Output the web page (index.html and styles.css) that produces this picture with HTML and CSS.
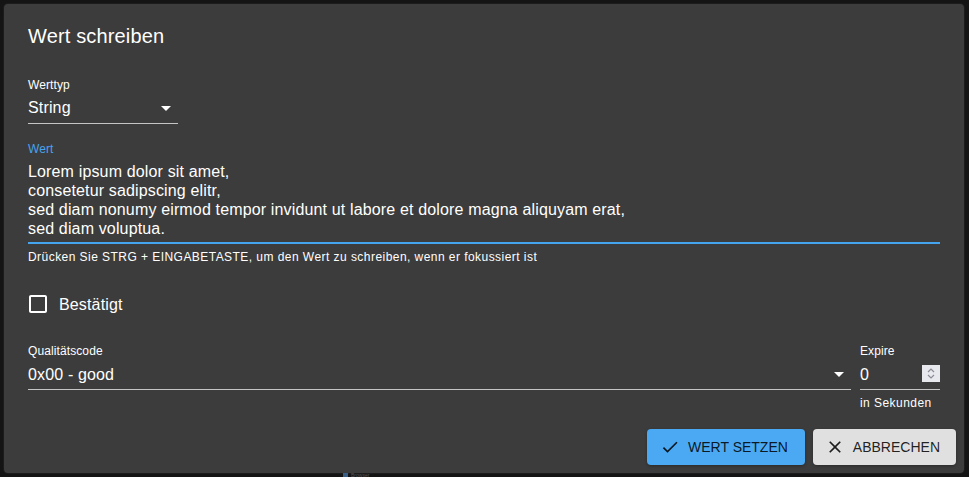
FILE: index.html
```html
<!DOCTYPE html>
<html lang="de">
<head>
<meta charset="utf-8">
<title>Wert schreiben</title>
<link rel="stylesheet" href="styles.css">
</head>
<body>
<div class="dialog">
  <h2 class="title">Wert schreiben</h2>
  <div class="content">
    <div class="field w150">
      <span class="label">Werttyp</span>
      <div class="input select">
        <span class="value">String</span>
        <svg class="arrow" viewBox="0 0 24 24" width="24" height="24"><path d="M7 10l5 5 5-5z" fill="#fff"/></svg>
      </div>
    </div>

    <div class="field mt16">
      <span class="label focused">Wert</span>
      <div class="input multiline">Lorem ipsum dolor sit amet,<br>consetetur sadipscing elitr,<br>sed diam nonumy eirmod tempor invidunt ut labore et dolore magna aliquyam erat,<br>sed diam voluptua.</div>
      <p class="helper">Drücken Sie STRG + EINGABETASTE, um den Wert zu schreiben, wenn er fokussiert ist</p>
    </div>

    <label class="check-row">
      <span class="check">
        <svg viewBox="0 0 24 24" width="24" height="24"><path fill="#fff" d="M19 5v14H5V5h14m0-2H5c-1.11 0-2 .9-2 2v14c0 1.1.89 2 2 2h14c1.1 0 2-.9 2-2V5c0-1.1-.9-2-2-2z"/></svg>
      </span>
      <span class="check-label">Bestätigt</span>
    </label>

    <div class="row">
      <div class="field grow">
        <span class="label">Qualitätscode</span>
        <div class="input select low">
          <span class="value">0x00 - good</span>
          <svg class="arrow" viewBox="0 0 24 24" width="24" height="24"><path d="M7 10l5 5 5-5z" fill="#fff"/></svg>
        </div>
      </div>
      <div class="field expire">
        <span class="label">Expire</span>
        <div class="input number low">
          <span class="value">0</span>
          <span class="spin">
            <svg viewBox="0 0 18 17" width="18" height="17"><path d="M6 7 L9 4 L12 7" fill="none" stroke="#8c8c96" stroke-width="1.2"/><path d="M6 10 L9 13 L12 10" fill="none" stroke="#8c8c96" stroke-width="1.2"/></svg>
          </span>
        </div>
        <p class="helper">in Sekunden</p>
      </div>
    </div>
  </div>
  <div class="actions">
    <button class="btn primary">
      <svg viewBox="0 0 24 24" width="20" height="20"><path fill="currentColor" d="M9 16.17L4.83 12l-1.42 1.41L9 19 21 7l-1.41-1.41z"/></svg>
      <span>Wert setzen</span>
    </button>
    <button class="btn secondary">
      <svg viewBox="0 0 24 24" width="20" height="20"><path fill="currentColor" d="M19 6.41L17.59 5 12 10.59 6.41 5 5 6.41 10.59 12 5 17.59 6.41 19 12 13.41 17.59 19 19 17.59 13.41 12z"/></svg>
      <span>Abbrechen</span>
    </button>
  </div>
</div>
<div class="behind"><span class="behind-icon"></span><span class="behind-text">Browser</span></div>
</body>
</html>
```

FILE: styles.css
```css
* { box-sizing: border-box; }
html, body { margin: 0; padding: 0; }
body {
  background: #141414;
  font-family: "Liberation Sans", Arial, sans-serif;
  color: #fff;
  width: 969px;
  height: 477px;
  overflow: hidden;
}
.dialog {
  margin: 4px 0 0 4px;
  width: 960px;
  background: #3c3c3c;
  border-radius: 4px;
  box-shadow: 0 0 1px 1px rgba(255,255,255,0.04);
  display: flex;
  flex-direction: column;
}
.title {
  margin: 0;
  padding: 16px 24px;
  font-size: 20px;
  font-weight: 400;
  line-height: 32px;
  letter-spacing: 0.15px;
}
.content {
  padding: 8px 24px;
  display: flex;
  flex-direction: column;
}
.field { display: flex; flex-direction: column; }
.w150 { width: 150px; }
.mt16 { margin-top: 16px; }
.label {
  font-size: 12px;
  line-height: 16px;
  height: 16px;
  padding-top: 1px;
  letter-spacing: 0.1px;
  color: #fff;
}
.label.focused { color: #45a4ee; }
.input {
  font-size: 16px;
  line-height: 19px;
  letter-spacing: 0.15px;
  padding: 6px 0 6px;
  border-bottom: 1px solid rgba(255,255,255,0.7);
  display: flex;
  align-items: flex-start;
  height: 32px;
}
.input.low { padding: 7px 0 5px; }
.input .value { flex: 1; }
.select .arrow { margin-top: -2px; margin-right: 0; }
.select.low .arrow { margin-top: -3px; }
.multiline {
  display: block;
  height: 88px;
  border-bottom: 2px solid #45a4ee;
}
.helper {
  margin: 4px 0 0;
  font-size: 12px;
  line-height: 19px;
  letter-spacing: 0.45px;
  color: #fff;
}
.check-row {
  margin-top: 16px;
  margin-left: -11px;
  display: flex;
  align-items: center;
  height: 42px;
}
.check { padding: 9px; width: 42px; height: 42px; display: flex; }
.check-label { font-size: 16px; line-height: 19px; letter-spacing: 0.15px; }
.row {
  margin-top: 17px;
  display: flex;
  gap: 9px;
}
.grow { flex: 1; }
.expire { width: 80px; }
.spin {
  width: 18px;
  height: 17px;
  margin-top: 0;
  background: #e8e8ef;
  display: flex;
}
.actions {
  padding: 8px;
  display: flex;
  justify-content: flex-end;
  gap: 8px;
}
.btn {
  font-family: "Liberation Sans", Arial, sans-serif;
  font-size: 14px;
  letter-spacing: 0;
  text-transform: uppercase;
  line-height: 24px;
  height: 36px;
  padding: 6px 16px 6px 12px;
  border: 0;
  border-radius: 4px;
  display: flex;
  align-items: center;
  gap: 8px;
  color: rgba(0,0,0,0.87);
  box-shadow: 0 1px 3px rgba(0,0,0,0.3);
}
.primary { background: #4aa9f2; padding-left: 13px; padding-right: 17px; }
.secondary { background: #e0e0e0; }
.behind {
  margin-left: 343px;
  display: flex;
  align-items: flex-start;
  gap: 3px;
  height: 4px;
}
.behind-icon { width: 5px; height: 4px; background: #3a5f86; }
.behind-text { font-size: 5px; line-height: 4px; color: #555; }
```
